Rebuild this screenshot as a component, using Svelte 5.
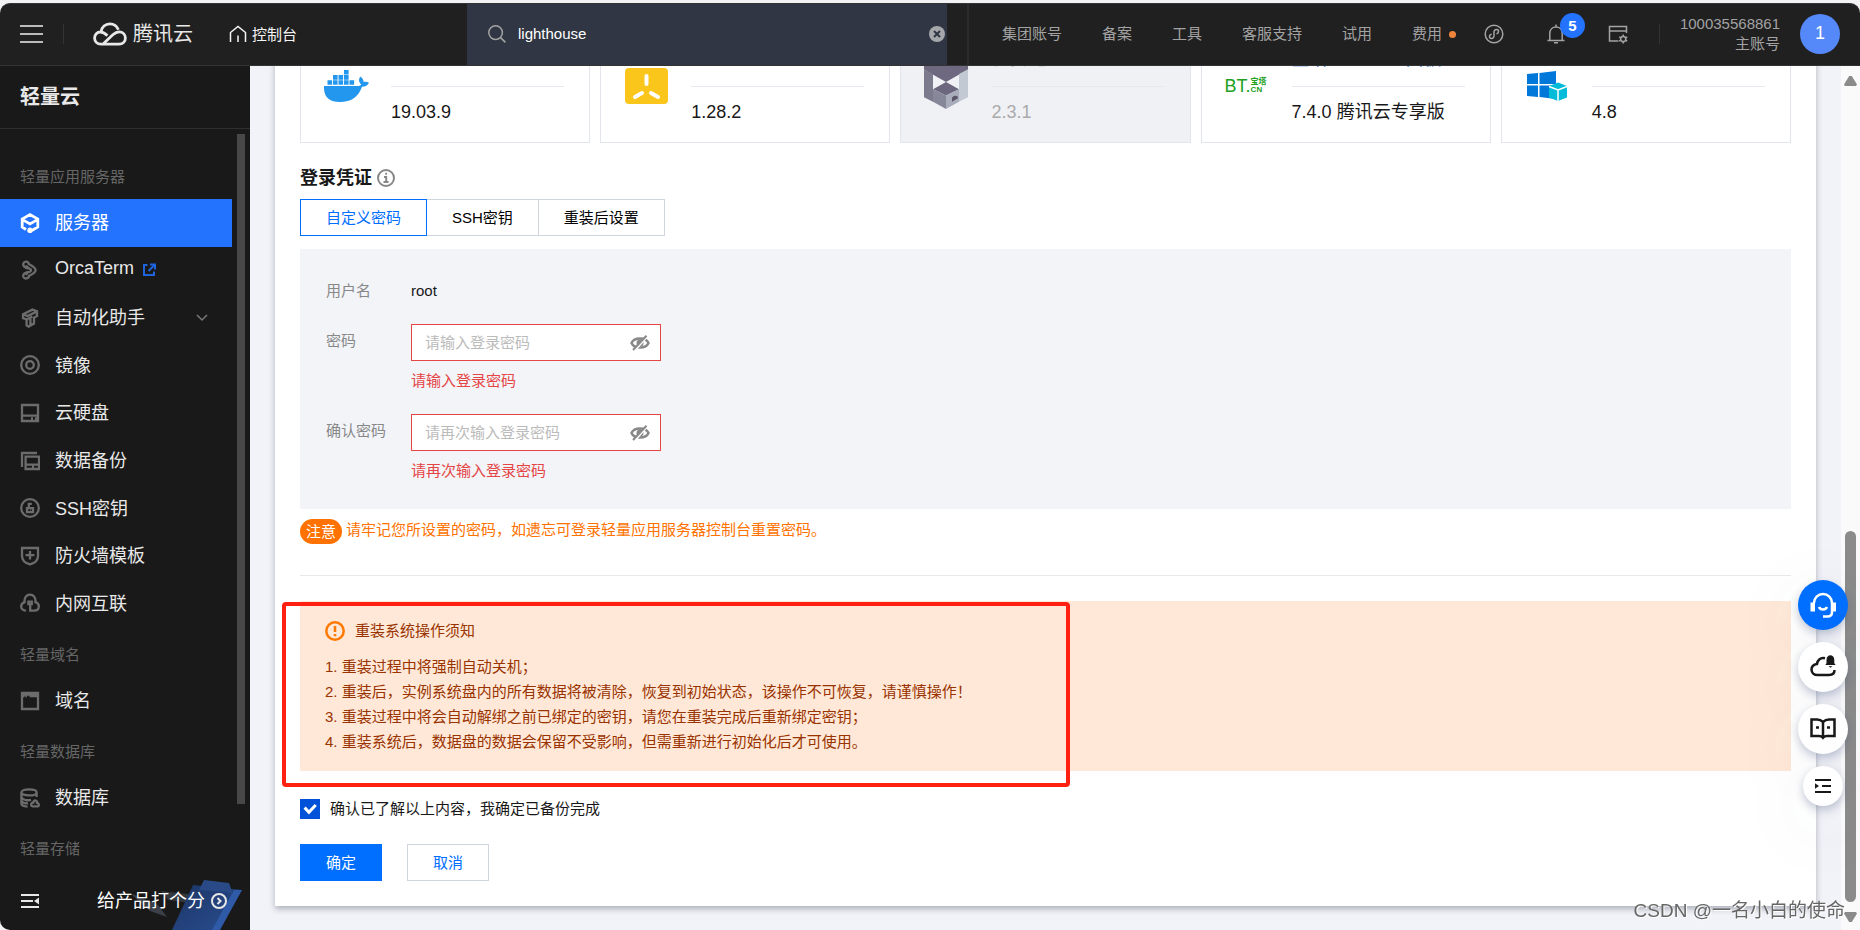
<script lang="ts">
  type Credential = 'custom' | 'ssh' | 'later';

  type MenuItem = {
    label: string;
    icon: string;
    external?: boolean;
    expandable?: boolean;
  };

  // icon: stroke paths on a 20x20 grid
  const mainMenu: MenuItem[] = [
    {
      label: '服务器',
      icon: 'M6 16.5 2.2 14V6L10 1.6 17.8 6v8L11 18M2.5 6.6 10 11l7.5-4.4M8.6 17.4a1.4 1.4 0 1 0 2.8 0a1.4 1.4 0 1 0-2.8 0'
    },
    {
      label: 'OrcaTerm',
      external: true,
      icon: 'M9.5 8.6C5 8.6 2.6 5.6 3.4 3.4C4.4.8 8.2 1 9 4.2C11 5.2 15.6 7.4 15.6 10.2C15.6 12.8 11.4 14.6 9.2 15.8C8.4 19 4.4 19.4 3.4 16.8C2.6 14.4 5 11.8 9.5 11.8C11.6 11.4 11.6 9 9.5 8.6M6 5.4C6.6 6.6 8 7.6 9.5 8.6M6 15C6.6 13.6 8 12.4 9.5 11.8'
    },
    {
      label: '自动化助手',
      expandable: true,
      icon: 'M3 6.2 12.5 1.6 17 3.4V8L14 9.6V15.6L8.6 18.6 6.6 17.4V11.4L3 10.2ZM3.4 6.4 7.4 8 16.8 3.6M7 11.2 12.4 8.4M10.4 9.8V17'
    },
    {
      label: '镜像',
      icon: 'M1.2 10a8.8 8.8 0 1 0 17.6 0a8.8 8.8 0 1 0-17.6 0M6.2 10a3.8 3.8 0 1 0 7.6 0a3.8 3.8 0 1 0-7.6 0'
    },
    { label: '云硬盘', icon: 'M2 2h16v16H2zM2 12.6h16M11 15.5h2M15 15.5h2' },
    { label: '数据备份', icon: 'M2 16V2h15M5.6 5.6H19V18H5.6zM5.6 13.6H19M12 16h2' },
    {
      label: 'SSH密钥',
      icon: 'M1.2 10a8.8 8.8 0 1 0 17.6 0a8.8 8.8 0 1 0-17.6 0M7 10.2h6v4H7zM8.8 10V5.8h3M10 12h.5'
    },
    { label: '防火墙模板', icon: 'M2 2h16v8c0 4.5-3.5 7.2-8 8.4C5.5 17.2 2 14.5 2 10zM5.6 9.2h8.8M10 5v8.4' },
    {
      label: '内网互联',
      icon: 'M6 17.6C2.6 17.6 1 15.4 1.2 13C1.4 11 3 9.8 4.6 9.2C4 4.4 6.6 1.6 10 1.6S16 4.4 15.4 9.2C17.4 9.8 18.8 11.2 18.8 13.2C18.8 16 17 17.6 14 17.6H10.2V10M8.4 8.6h3.4v2.6H8.4z'
    }
  ];

  const otherGroups: { title: string; items: MenuItem[] }[] = [
    {
      title: '轻量域名',
      items: [{ label: '域名', icon: 'M2 2h16v16H2zM2 3.6h16M2 5.2h2.6M5.4 5.2H7M9.5 5.2H18' }]
    },
    {
      title: '轻量数据库',
      items: [
        {
          label: '数据库',
          icon: 'M1.4 4.4C1.4 0.4 16.6 0.4 16.6 4.4S1.4 8.4 1.4 4.4V15.6C1.4 17.4 4 18.4 7.6 18.6M16.6 4.4V9M1.6 9.6C3 12.4 8 12.6 11 11.8M1.6 13.4C3 15 5 15.4 8 15.4M12.6 18.4C10 17.6 11.4 14.4 13.2 14.6C14 11.6 17.4 12 17 14.8C19.8 15.4 19 18.4 17.2 18.4Z'
        }
      ]
    },
    { title: '轻量存储', items: [] }
  ];

  const navLinks = ['集团账号', '备案', '工具', '客服支持', '试用', '费用'];

  const apps = [
    { logo: 'docker', name: '', version: '19.03.9' },
    { logo: 'k3s', name: '', version: '1.28.2' },
    { logo: 'chain', name: '长安链', version: '2.3.1', disabled: true },
    { logo: 'bt', name: '宝塔Windows 面板', version: '7.4.0 腾讯云专享版', link: true },
    { logo: 'windows', name: '', version: '4.8' }
  ];

  const credentials: { key: Credential; label: string }[] = [
    { key: 'custom', label: '自定义密码' },
    { key: 'ssh', label: 'SSH密钥' },
    { key: 'later', label: '重装后设置' }
  ];

  const notices = [
    '重装过程中将强制自动关机；',
    '重装后，实例系统盘内的所有数据将被清除，恢复到初始状态，该操作不可恢复，请谨慎操作！',
    '重装过程中将会自动解绑之前已绑定的密钥，请您在重装完成后重新绑定密钥；',
    '重装系统后，数据盘的数据会保留不受影响，但需重新进行初始化后才可使用。'
  ];

  let keyword = $state('lighthouse');
  let credential = $state<Credential>('custom');
  let activeMenu = $state('服务器');
  let confirmed = $state(true);

  let fields = $state([
    { id: 'password', label: '密码', hint: '请输入登录密码', value: '', visible: false },
    { id: 'confirm', label: '确认密码', hint: '请再次输入登录密码', value: '', visible: false }
  ]);
</script>

{#snippet menuItem(item: MenuItem)}
  <li>
    <a
      class="menu-item"
      class:active={activeMenu === item.label}
      href={'#' + item.label}
      onclick={() => (activeMenu = item.label)}
    >
      <svg class="menu-icon" viewBox="0 0 20 20"><path d={item.icon} /></svg>
      <span>{item.label}</span>
      {#if item.external}
        <svg class="external" viewBox="0 0 14 14">
          <path d="M5.5 2H2v10h10V8.5M8 1.5h5v5M12.5 2 6.5 8" />
        </svg>
      {/if}
      {#if item.expandable}
        <svg class="arrow" viewBox="0 0 12 8"><path d="M1 1l5 5 5-5" /></svg>
      {/if}
    </a>
  </li>
{/snippet}

<div class="window">
  <header class="topbar">
    <div class="brand">
      <button class="plain burger" aria-label="菜单"><i></i><i></i><i></i></button>
      <span class="divider"></span>
      <a class="logo" href="#home">
        <svg width="34" height="24" viewBox="0 0 34 24">
          <path
            d="M8 22.2C4 22.2 1.6 19.4 1.6 16C1.6 12.6 4.2 10 7.4 10C10 10 12 11.4 14.4 13.6M8 9.8C8.6 5 12.4 1.8 16.8 1.8C21 1.8 24 4.2 25.4 7.8M8 22.2H26C30 22.2 32.4 19.4 32.4 16C32.4 12.6 29.8 9.8 26.2 9.8C23.4 9.8 21.8 11 19.8 12.8L10.6 21.4"
          />
        </svg>
        <span>腾讯云</span>
      </a>
      <a class="console" href="#console">
        <svg width="18" height="18" viewBox="0 0 18 18">
          <path d="M1.5 17V7.5L9 1.5l7.5 6V17M9 10.5V17" />
        </svg>
        <span>控制台</span>
      </a>
    </div>

    <div class="search">
      <svg width="18" height="18" viewBox="0 0 18 18">
        <circle cx="7.6" cy="7.6" r="6.8" />
        <path d="M12.6 12.6 17.4 17.4" />
      </svg>
      <input aria-label="搜索" bind:value={keyword} />
      <button class="plain clear" aria-label="清除" onclick={() => (keyword = '')}>
        <svg width="16" height="16" viewBox="0 0 16 16">
          <circle cx="8" cy="8" r="8" />
          <path d="M5 5l6 6M11 5l-6 6" />
        </svg>
      </button>
    </div>

    <nav class="links">
      {#each navLinks as link}
        <a href={'#' + link}>{link}{#if link === '费用'}<i class="dot"></i>{/if}</a>
      {/each}
    </nav>

    <div class="tools">
      <button class="plain" aria-label="小程序">
        <svg viewBox="0 0 20 20">
          <circle cx="10" cy="10" r="8.8" />
          <path
            d="M7.6 10.2c-2.4.2-3 3.6-.6 4.2 1.8.4 3-1 3-2.4V8c0-1.4 1.2-2.8 3-2.4 2.4.6 1.8 4-.6 4.2"
          />
        </svg>
      </button>
      <button class="plain bell" aria-label="消息">
        <svg viewBox="0 0 20 20">
          <path d="M1.5 16.5H18.5M3.8 16.5V9.5C3.8 5.5 6.5 3 10 3s6.2 2.5 6.2 6.5v7M10 3V.5M8 18.8h4" />
        </svg>
        <span class="badge">5</span>
      </button>
      <button class="plain" aria-label="设置">
        <svg viewBox="0 0 20 20">
          <path d="M10.5 17H1.5V2.5h17V9M1.5 7h17" />
          <circle cx="15.2" cy="15" r="2.6" />
          <path d="M15.2 10.5v2M15.2 17.5v2M11.2 12.8l1.7 1M17.5 16.2l1.7 1M11.2 17.2l1.7-1M17.5 13.8l1.7-1" />
        </svg>
      </button>
      <span class="divider"></span>
      <div class="account">
        <span>100035568861</span>
        <span>主账号</span>
      </div>
      <button class="plain avatar">1</button>
    </div>
  </header>

  <div class="body">
    <aside class="sidebar">
      <h2>轻量云</h2>
      <nav class="menu">
        <h3>轻量应用服务器</h3>
        <ul class="main-menu">
          {#each mainMenu as item}
            {@render menuItem(item)}
          {/each}
        </ul>
        {#each otherGroups as group}
          <h3>{group.title}</h3>
          <ul>
            {#each group.items as item}
              {@render menuItem(item)}
            {/each}
          </ul>
        {/each}
        <span class="menu-thumb"></span>
      </nav>
      <div class="sidebar-foot">
        <svg class="clipboard" width="190" height="50" viewBox="0 0 190 50">
          <defs>
            <linearGradient id="board" x1="0" y1="0" x2="1" y2="1">
              <stop offset="0" stop-color="#1c3564" />
              <stop offset="1" stop-color="#2a4e92" />
            </linearGradient>
          </defs>
          <path d="M78 13 106 25 115 37 98 31Z" fill="#3b3f47" />
          <path d="M109 11 152 16 146 24 116 20Z" fill="#34383f" />
          <path d="M141 5 190 10 165 50H120Z" fill="url(#board)" />
          <path d="M182 10 190 10 168 50H160Z" fill="#2f5aa8" />
          <path d="M152 0 177 3 181 14 176 12 147 10Z" fill="#2a4a87" />
        </svg>
        <button class="plain" aria-label="收起菜单">
          <svg width="20" height="16" viewBox="0 0 20 16">
            <path d="M1 2h18M1 8h12M1 14h18" />
            <path class="solid" d="M19 4.5v7L14 8z" />
          </svg>
        </button>
        <a href="#rate">
          <span>给产品打个分</span>
          <svg width="16" height="16" viewBox="0 0 16 16">
            <circle cx="8" cy="8" r="7" />
            <path d="M6.5 5l3 3-3 3" />
          </svg>
        </a>
      </div>
    </aside>

    <main class="content">
      <section class="panel">
        <div class="apps">
          {#each apps as app}
            <div class="app" class:disabled={app.disabled}>
              <div class="app-logo">
                {#if app.logo === 'docker'}
                  <svg width="45" height="33" viewBox="0 0 45 33" fill="#2396ed">
                    <path d="M0 16H33c2 0 3.5-.5 4.2-1.5-2.6-2.6-2.8-5.6-.9-8 2.2 1.5 3.3 3.4 3.3 5.5 2-.6 4-.2 5.4.8-1.2 2.7-3.6 3.9-7 3.9C34.5 27 27 32 16 32 5 32-.6 26.5 0 16Z" />
                    <path d="M3.5 10.2h4.6v4.6H3.5zM9 10.2h4.6v4.6H9zM14.5 10.2h4.6v4.6h-4.6zM20 10.2h4.6v4.6H20zM25.5 10.2h4.6v4.6h-4.6zM9 5.1h4.6v4.6H9zM14.5 5.1h4.6v4.6h-4.6zM20 5.1h4.6v4.6H20zM20 0h4.6v4.6H20z" />
                  </svg>
                {:else if app.logo === 'k3s'}
                  <svg width="44" height="36" viewBox="0 0 44 36">
                    <rect x="1" width="43" height="36" rx="4" fill="#fac61c" />
                    <path d="M22.5 8v8M18 25l-7 4M27 25l7 4" stroke="#fff" stroke-width="4" stroke-linecap="round" />
                  </svg>
                {:else if app.logo === 'chain'}
                  <svg width="44" height="45" viewBox="0 0 44 50" preserveAspectRatio="none">
                    <path d="M0 0H44V6L22 20 0 6Z" fill="#6e6880" />
                    <path d="M0 6 9 11V42L0 37Z" fill="#7c7b8d" />
                    <path d="M44 6 35 11V42L44 37Z" fill="#c3c9d2" />
                    <path d="M9 28 22 20 35 28 22 35Z" fill="#6c667e" />
                    <path d="M9 28 22 35V50L9 42Z" fill="#86889a" />
                    <path d="M35 28 22 35V50L35 42Z" fill="#a9adbb" />
                    <path d="M28 38c0-3 6-4 6 0l-6 4Z" fill="#5a5668" />
                  </svg>
                {:else if app.logo === 'bt'}
                  <span class="bt">BT.<span class="bt-small"><b>宝塔</b><b>CN</b></span></span>
                {:else}
                  <svg width="44" height="30" viewBox="0 0 44 30">
                    <path d="M2 3 13 2v11H2zM14.5 2 31 0v13H14.5zM2 14.5h11V26L2 25zM14.5 14.5H31V28l-16.5-2z" fill="#0078d9" />
                    <path d="M24 15 33 11.5 42 15v11.5L33 30 24 26.5Z" fill="#04bcd9" />
                    <path d="M24 15.5 33 19l9-3.5M33 19v11" stroke="#fff" stroke-width="1.5" fill="none" />
                  </svg>
                {/if}
              </div>
              <div class="app-info">
                <div class="app-name" class:link={app.link}>{app.name}</div>
                <div class="app-version">{app.version}</div>
              </div>
            </div>
          {/each}
        </div>

        <h3 class="section-title">
          登录凭证
          <svg width="18" height="18" viewBox="0 0 18 18">
            <circle cx="9" cy="9" r="8" />
            <path d="M7 8h2.2v5M6.5 13h5M8.2 4.8h1.8" />
          </svg>
        </h3>

        <div class="tabs">
          {#each credentials as item}
            <button class:selected={credential === item.key} onclick={() => (credential = item.key)}>
              {item.label}
            </button>
          {/each}
        </div>

        <form class="form">
          <div class="form-row">
            <span class="form-label">用户名</span>
            <span class="form-value">root</span>
          </div>
          {#each fields as field}
            <div class="form-row">
              <label class="form-label" for={field.id}>{field.label}</label>
              <div>
                <div class="input-box">
                  <input
                    id={field.id}
                    type={field.visible ? 'text' : 'password'}
                    placeholder={field.hint}
                    bind:value={field.value}
                  />
                  <button
                    type="button"
                    class="plain"
                    aria-label="显示密码"
                    onclick={() => (field.visible = !field.visible)}
                  >
                    <svg width="20" height="16" viewBox="0 0 20 16">
                      <path class="eye" d="M10 3.5C5.5 3.5 2.4 6 1.5 8c.9 2 4 4.5 8.5 4.5S17.6 10 18.5 8c-.9-2-4-4.5-8.5-4.5Z" />
                      <path class="pupil" d="M6.5 8a3.5 3.5 0 1 0 7 0a3.5 3.5 0 1 0-7 0" />
                      <path class="gap" d="M4.5 16 17 1.5" />
                      <path class="slash" d="M3 15 16.5.8" />
                    </svg>
                  </button>
                </div>
                {#if !field.value}
                  <p class="error">{field.hint}</p>
                {/if}
              </div>
            </div>
          {/each}
        </form>

        <p class="reminder">
          <span class="tag">注意</span>
          <span>请牢记您所设置的密码，如遗忘可登录轻量应用服务器控制台重置密码。</span>
        </p>

        <hr />

        <div class="alert">
          <div class="alert-title">
            <svg width="20" height="20" viewBox="0 0 20 20">
              <circle cx="10" cy="10" r="8.7" />
              <path d="M10 5v6M10 13v2.2" />
            </svg>
            <span>重装系统操作须知</span>
          </div>
          <ol>
            {#each notices as notice, i}
              <li>{i + 1}. {notice}</li>
            {/each}
          </ol>
          <span class="highlight"></span>
        </div>

        <label class="agree">
          <input type="checkbox" bind:checked={confirmed} />
          <span>确认已了解以上内容，我确定已备份完成</span>
        </label>

        <div class="actions">
          <button class="primary" disabled={!confirmed}>确定</button>
          <button>取消</button>
        </div>
      </section>
    </main>

    <div class="scrollbar">
      <i class="up"></i>
      <i class="thumb"></i>
      <i class="down"></i>
    </div>
  </div>

  <div class="float">
    <button class="plain help" aria-label="在线客服">
      <svg width="26" height="26" viewBox="0 0 26 26">
        <path d="M4 11a9 9 0 0 1 18 0v9c0 3-1.5 4.5-4.5 4.5H13" />
        <path d="M.5 10.5H5v9H.5zM21.5 10.5H26v9h-4.5z" class="solid" stroke="none" />
        <path d="M9 15c1.5 3.4 6.5 3.4 8 0" />
      </svg>
    </button>
    <button class="plain" aria-label="消息通知">
      <svg width="26" height="26" viewBox="0 0 26 26">
        <path d="M15 4.2C10.5 3 7.5 6 7 10 3.5 10.5 1.5 12.5 1.5 15.5c0 3.3 2.5 5.5 6 5.5H19c3.5 0 5.5-2 5.5-5" />
        <path class="solid" d="M15.5 10.5V11h9.8v-.8c-.8-.3-1-.8-1-1.7V6c0-6.2-7.8-6.2-7.8 0v2.5c0 .9-.2 1.6-1 2zM18.5 12.3h4l-2 1.5z" stroke="none" />
      </svg>
    </button>
    <button class="plain" aria-label="文档">
      <svg width="26" height="26" viewBox="0 0 26 26">
        <path d="M13 6C11 4 9 3.5 7 3.5H1.5V20H9c2 0 3 .5 4 1.8 1-1.3 2-1.8 4-1.8h7.5V3.5H19c-2 0-4 .5-6 2.5zM13 6v16M6 11.5h3M17 11.5h3" />
      </svg>
    </button>
    <button class="plain small" aria-label="收起">
      <svg width="18" height="18" viewBox="0 0 18 18">
        <path d="M1 3h16M8 9h9M1 15h16" />
        <path class="solid" d="M1 6.2v5.6L5 9z" stroke="none" />
      </svg>
    </button>
  </div>

  <span class="watermark">CSDN @一名小白的使命</span>
</div>

<style>
  :global(body) {
    margin: 0;
    background: #f3f3f5;
  }

  .window,
  .window button,
  .window input {
    font-family: 'Liberation Sans', 'Noto Sans CJK SC', sans-serif;
    font-size: 15px;
  }

  .window {
    display: flex;
    flex-direction: column;
    box-sizing: border-box;
    height: 100vh;
    padding-top: 3px;
    overflow: hidden;
    color: #181818;
  }

  svg {
    display: block;
    flex: none;
  }

  a {
    color: inherit;
    text-decoration: none;
  }

  h2,
  h3,
  p,
  ul,
  ol {
    margin: 0;
    padding: 0;
    list-style: none;
  }

  .plain {
    display: flex;
    align-items: center;
    justify-content: center;
    padding: 0;
    border: none;
    background: none;
    color: inherit;
    cursor: pointer;
  }

  /* top bar */
  .topbar {
    display: flex;
    flex: none;
    box-sizing: border-box;
    height: 63px;
    border: 1px solid #333;
    border-width: 1px 0;
    border-radius: 10px 10px 0 0;
    background: #202020;
    color: #a3a3a3;
    overflow: hidden;
  }

  .topbar svg {
    fill: none;
    stroke: currentColor;
    stroke-width: 1.5;
  }

  .divider {
    width: 1px;
    height: 20px;
    background: #333;
  }

  .brand {
    display: flex;
    align-items: center;
    box-sizing: border-box;
    width: 467px;
    padding: 0 0 2px 20px;
    color: #e8e8e8;
  }

  .burger {
    flex-direction: column;
    gap: 6px;
    width: 23px;
    margin-right: 20px;
  }

  .burger i {
    width: 100%;
    height: 2px;
    background: #bbb;
  }

  .logo {
    display: flex;
    align-items: center;
    gap: 6px;
    margin: 0 36px 0 29px;
    font-size: 20px;
    line-height: 28px;
  }

  .topbar .logo svg {
    stroke-width: 2.8;
  }

  .console {
    display: flex;
    align-items: center;
    gap: 5px;
    color: #f5f5f5;
  }

  .search {
    display: flex;
    align-items: center;
    box-sizing: border-box;
    width: 480px;
    padding: 0 2px 2px 21px;
    background: #303643;
  }

  .search input {
    flex: 1;
    min-width: 0;
    padding: 0 12px;
    border: none;
    outline: none;
    background: none;
    color: #fff;
  }

  .clear circle {
    fill: #a5a7ab;
    stroke: none;
  }

  .clear path {
    stroke: #303643;
    stroke-width: 2;
  }

  .links {
    display: flex;
    align-items: center;
    gap: 40px;
    margin-left: 20px;
    padding: 0 0 4px 33px;
    border-left: 2px solid #2b2b2b;
    white-space: nowrap;
  }

  .dot {
    display: inline-block;
    width: 7px;
    height: 7px;
    margin: 0 0 1px 7px;
    border-radius: 50%;
    background: #ee833b;
  }

  .tools {
    display: flex;
    align-items: center;
    gap: 20px;
    margin-left: auto;
    padding: 0 20px 2px 0;
  }

  .tools svg {
    width: 20px;
    height: 20px;
  }

  .tools .plain + .plain {
    margin-left: 22px;
  }

  .tools .divider {
    margin-left: 11px;
  }

  .bell {
    position: relative;
  }

  .badge {
    position: absolute;
    left: 14px;
    bottom: 6px;
    width: 25px;
    border-radius: 50%;
    background: #2373ff;
    color: #fff;
    font-weight: bold;
    line-height: 25px;
  }

  .account {
    display: flex;
    flex-direction: column;
    align-items: flex-end;
    line-height: 20px;
  }

  .window .avatar {
    width: 40px;
    height: 40px;
    border-radius: 50%;
    background: #5588f8;
    color: #fff;
    font-size: 18px;
  }

  .body {
    display: flex;
    flex: 1;
    min-height: 0;
  }

  /* sidebar */
  .sidebar {
    display: flex;
    flex: none;
    flex-direction: column;
    width: 250px;
    border-radius: 0 0 0 10px;
    background: #191919;
    color: #e8e8e8;
    overflow: hidden;
  }

  .sidebar h2 {
    flex: none;
    padding: 0 20px;
    border-bottom: 1px solid #303030;
    font-size: 20px;
    line-height: 62px;
  }

  .menu {
    position: relative;
    flex: 1;
    min-height: 0;
    padding: 20px 18px 0 0;
    overflow: hidden;
  }

  .menu h3 {
    box-sizing: border-box;
    height: 50px;
    padding: 5px 20px 0;
    color: #666;
    font-size: 15px;
    font-weight: normal;
    line-height: 45px;
  }

  .main-menu {
    display: grid;
    grid-auto-rows: 1fr;
    height: 428px;
  }

  .menu-item {
    display: flex;
    align-items: center;
    box-sizing: border-box;
    height: 100%;
    min-height: 47px;
    padding: 0 24px 0 20px;
    font-size: 18px;
  }

  .menu-item span,
  .sidebar-foot span {
    padding-bottom: 3px;
  }

  .menu-item.active {
    background: #2373ff;
    color: #fff;
  }

  .menu-icon {
    width: 20px;
    height: 20px;
    margin-right: 15px;
    fill: none;
    stroke: #6c6c6c;
    stroke-width: 2.3;
  }

  .active .menu-icon {
    stroke: #fff;
    stroke-width: 2.8;
  }

  .external {
    width: 14px;
    height: 14px;
    margin-left: 8px;
    fill: none;
    stroke: #1f64dc;
    stroke-width: 2;
  }

  .arrow {
    width: 12px;
    height: 8px;
    margin-left: auto;
    fill: none;
    stroke: #777;
    stroke-width: 1.5;
  }

  .menu-thumb {
    position: absolute;
    top: 5px;
    right: 5px;
    width: 8px;
    height: 670px;
    background: #484848;
  }

  .sidebar-foot {
    position: relative;
    display: flex;
    flex: none;
    align-items: center;
    justify-content: space-between;
    height: 59px;
    padding: 0 23px 0 20px;
  }

  .sidebar-foot svg {
    fill: none;
    stroke: #e8e8e8;
    stroke-width: 2;
  }

  .sidebar-foot .solid {
    fill: #e8e8e8;
    stroke: none;
  }

  .sidebar-foot .clipboard {
    position: absolute;
    right: 8px;
    bottom: 0;
    stroke: none;
  }

  .sidebar-foot a {
    position: relative;
    display: flex;
    align-items: center;
    gap: 6px;
    color: #fff;
    font-size: 18px;
  }

  /* content, scrolled to its end */
  .content {
    display: flex;
    flex: 1;
    flex-direction: column;
    justify-content: flex-end;
    min-width: 0;
    padding: 0 25px 24px;
    background: #f2f3f8;
    overflow: hidden;
  }

  .panel {
    flex: none;
    padding: 25px;
    background: #fff;
    box-shadow: 0 3px 6px rgba(54, 58, 80, 0.36);
  }

  .apps {
    display: grid;
    grid-template-columns: repeat(5, 1fr);
    gap: 10px;
  }

  .app {
    display: flex;
    align-items: center;
    gap: 22px;
    padding: 18px 25px 17px 23px;
    border: 1px solid #e2e5ec;
  }

  .app-logo {
    flex: none;
    width: 45px;
  }

  .app-info {
    flex: 1;
    font-size: 18px;
    line-height: 25px;
    white-space: nowrap;
  }

  .app-name {
    min-height: 25px;
    padding-bottom: 14px;
    border-bottom: 1px solid #e7e9ef;
  }

  .app-name.link {
    color: #0052d9;
  }

  .app-version {
    padding-top: 13px;
  }

  .app.disabled {
    background: #f0f1f5;
    color: #aaa;
  }

  .bt {
    display: flex;
    align-items: center;
    color: #20a020;
    font-size: 18px;
    line-height: 18px;
  }

  .bt-small {
    display: grid;
    font-size: 8px;
    line-height: 8px;
  }

  .section-title {
    display: flex;
    align-items: center;
    gap: 5px;
    margin: 20px 0 6px;
    font-size: 18px;
    line-height: 30px;
  }

  .section-title svg {
    fill: none;
    stroke: #888;
    stroke-width: 2;
  }

  .tabs {
    display: flex;
  }

  .tabs button,
  .actions button {
    box-sizing: border-box;
    height: 37px;
    padding: 0 25px 2px;
    border: 1px solid #cfd5de;
    background: #fff;
    color: #000;
    cursor: pointer;
  }

  .tabs button + button {
    border-left: none;
  }

  .tabs button.selected {
    border-color: #006eff;
    color: #006eff;
  }

  .form {
    display: grid;
    gap: 16px;
    margin-top: 13px;
    padding: 25px 26px 21px;
    background: #f2f4f8;
  }

  .form-row {
    display: flex;
  }

  .form-label {
    width: 85px;
    color: #888;
    line-height: 34px;
  }

  .form-value {
    line-height: 34px;
  }

  .input-box {
    display: flex;
    box-sizing: border-box;
    width: 250px;
    height: 37px;
    padding-right: 10px;
    border: 1px solid #e54545;
    background: #fff;
  }

  .input-box input {
    flex: 1;
    min-width: 0;
    padding: 0 13px;
    border: none;
    outline: none;
    background: none;
  }

  .input-box input::placeholder {
    color: #bbb;
  }

  .input-box svg {
    fill: none;
    stroke: #888;
    stroke-width: 2;
  }

  .input-box .eye {
    stroke-width: 2.5;
  }

  .input-box .pupil {
    fill: #888;
    stroke: none;
  }

  .input-box .gap {
    stroke: #fff;
  }

  .error {
    padding: 8px 0 5px;
    color: #e54545;
    line-height: 24px;
  }

  .reminder {
    display: flex;
    gap: 4px;
    margin-top: 10px;
    color: #ff7200;
    line-height: 21px;
  }

  .tag {
    padding: 0 6px;
    border-radius: 13px;
    background: #ff7200;
    color: #fff;
    line-height: 25px;
  }

  hr {
    height: 1px;
    margin: 31px 0 25px;
    border: none;
    background: #e7e9eb;
  }

  .alert {
    position: relative;
    padding: 17px 25px 17px;
    background: #ffe8d7;
    color: #993300;
    line-height: 25px;
  }

  .alert-title {
    display: flex;
    align-items: center;
    gap: 10px;
    margin-bottom: 11px;
  }

  .alert-title svg {
    fill: none;
    stroke: #ff7800;
    stroke-width: 2.5;
  }

  .highlight {
    position: absolute;
    top: 1px;
    left: -18px;
    box-sizing: border-box;
    width: 788px;
    height: 185px;
    border: 4px solid #ff2012;
    border-radius: 4px;
  }

  .agree {
    display: flex;
    align-items: center;
    gap: 10px;
    margin: 28px 0 25px;
    line-height: 20px;
  }

  .agree input {
    width: 20px;
    height: 20px;
    margin: 0;
    border: 1px solid #0052d9;
    appearance: none;
  }

  .agree input:checked {
    background: #0052d9;
  }

  .agree input:checked::before {
    display: block;
    height: 100%;
    background: #fff;
    clip-path: polygon(14% 48%, 26% 36%, 44% 55%, 76% 22%, 88% 34%, 44% 80%);
    content: '';
  }

  .actions {
    display: flex;
    gap: 25px;
  }

  .actions button {
    color: #006eff;
  }

  .actions .primary {
    border-color: #006eff;
    background: #006eff;
    color: #fff;
  }

  .scrollbar {
    display: flex;
    flex: none;
    flex-direction: column;
    align-items: center;
    width: 19px;
    background: #fafafa;
  }

  .scrollbar .up,
  .scrollbar .down {
    width: 13px;
    height: 10px;
    background: #8b8b8b;
    clip-path: polygon(40% 0, 60% 0, 100% 85%, 92% 100%, 8% 100%, 0 85%);
  }

  .scrollbar .up {
    margin-top: 10px;
  }

  .scrollbar .down {
    margin-bottom: 8px;
    transform: rotate(180deg);
  }

  .scrollbar .thumb {
    width: 11px;
    height: 371px;
    margin: auto 0 10px;
    border-radius: 6px;
    background: #8b8b8b;
  }

  /* floating helpers */
  .float {
    position: fixed;
    right: 12px;
    bottom: 124px;
    display: flex;
    flex-direction: column;
    align-items: center;
    gap: 12px;
  }

  .float button {
    width: 50px;
    height: 50px;
    border-radius: 50%;
    background: #fff;
    color: #181818;
    box-shadow:
      0 4px 10px rgba(55, 75, 120, 0.3),
      0 20px 80px rgba(55, 99, 120, 0.1);
  }

  .float .help {
    background: #006eff;
    color: #fff;
  }

  .float .small {
    width: 40px;
    height: 40px;
  }

  .float svg {
    fill: none;
    stroke: currentColor;
    stroke-width: 2.5;
  }

  .float .small svg {
    stroke-width: 2;
  }

  .float .solid {
    fill: currentColor;
  }

  .watermark {
    position: fixed;
    right: 15px;
    bottom: 5px;
    color: #666;
    font-size: 19px;
    line-height: 28px;
    text-shadow: 1px 1px 0 #fff;
  }
</style>
